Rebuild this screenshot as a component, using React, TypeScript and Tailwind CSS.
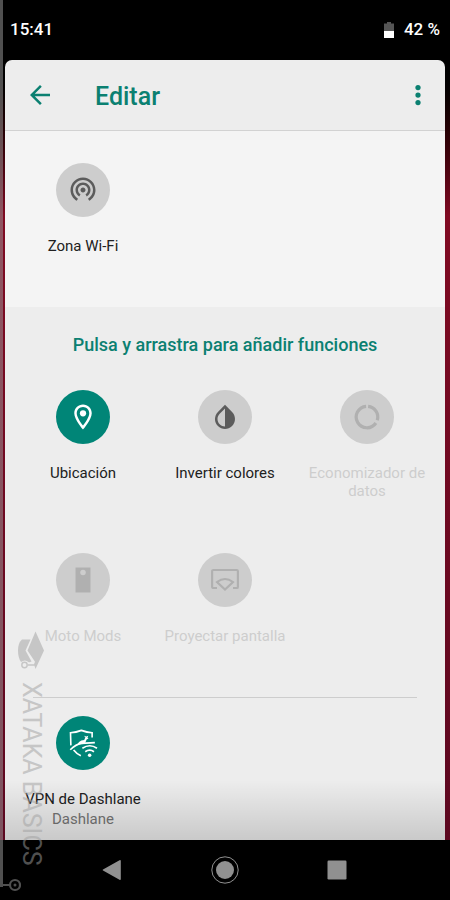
import type { ReactNode } from "react"

type TileState = "active" | "inactive" | "unavailable"

interface Tile {
  label: string
  sublabel?: string
  state: TileState
  icon: ReactNode
}

const CIRCLE_STYLES: Record<TileState, string> = {
  active: "bg-[#008577] text-white",
  inactive: "bg-[#cdcdcd] text-[#5c5c5c]",
  unavailable: "bg-[#cdcdcd] text-[#b0b0b0]",
}

function Icon({ children }: { children: ReactNode }) {
  return (
    <svg viewBox="0 0 24 24" fill="currentColor" className="size-[30px]" aria-hidden="true">
      {children}
    </svg>
  )
}

const CURRENT_TILES: Tile[] = [
  {
    label: "Zona Wi-Fi",
    state: "inactive",
    icon: (
      <Icon>
        <path d="M12 10c-1.1 0-2 .9-2 2s.9 2 2 2 2-.9 2-2-.9-2-2-2zm6 2c0-3.31-2.69-6-6-6s-6 2.69-6 6c0 2.22 1.21 4.15 3 5.19l1-1.74c-1.19-.7-2-1.97-2-3.45 0-2.21 1.79-4 4-4s4 1.79 4 4c0 1.48-.81 2.75-2 3.45l1 1.74c1.79-1.04 3-2.97 3-5.19zM12 2C6.48 2 2 6.48 2 12c0 3.7 2.01 6.92 4.99 8.65l1-1.73C5.61 17.53 4 14.96 4 12c0-4.42 3.58-8 8-8s8 3.58 8 8c0 2.96-1.61 5.53-4 6.92l1 1.73c2.99-1.73 5-4.95 5-8.65 0-5.52-4.48-10-10-10z" />
      </Icon>
    ),
  },
]

const AVAILABLE_TILES: Tile[] = [
  {
    label: "Ubicación",
    state: "active",
    icon: (
      <Icon>
        <path d="M12 2C8.13 2 5 5.13 5 9c0 5.25 7 13 7 13s7-7.75 7-13c0-3.87-3.13-7-7-7zM7 9c0-2.76 2.24-5 5-5s5 2.24 5 5c0 2.88-2.88 7.19-5 9.88C9.92 16.21 7 11.85 7 9z" />
        <circle cx="12" cy="9" r="2.5" />
      </Icon>
    ),
  },
  {
    label: "Invertir colores",
    state: "inactive",
    icon: (
      <Icon>
        <path d="M17.66 7.93L12 2.27 6.34 7.93c-3.12 3.12-3.12 8.19 0 11.31C7.9 20.8 9.95 21.58 12 21.58s4.1-.78 5.66-2.34c3.12-3.12 3.12-8.19 0-11.31zM12 19.59c-1.6 0-3.11-.62-4.24-1.76C6.62 16.69 6 15.19 6 13.59s.62-3.11 1.76-4.24L12 5.1v14.49z" />
      </Icon>
    ),
  },
  {
    label: "Economizador de datos",
    state: "unavailable",
    icon: (
      <Icon>
        <g fill="none" stroke="currentColor" strokeWidth="2.6">
          <path d="M12.9 3.45A8.6 8.6 0 0 1 20.2 14.6" />
          <path d="M19.1 16.8A8.6 8.6 0 1 1 11.3 3.43" />
        </g>
      </Icon>
    ),
  },
  {
    label: "Moto Mods",
    state: "unavailable",
    icon: (
      <Icon>
        <path d="M6 2h12v20H6z" />
        <circle cx="12" cy="6" r="2.2" fill="#cdcdcd" />
      </Icon>
    ),
  },
  {
    label: "Proyectar pantalla",
    state: "unavailable",
    icon: (
      <Icon>
        <g fill="none" stroke="currentColor" strokeWidth="1.7">
          <path d="M5.6 18.4H2.6a.9.9 0 0 1-.9-.9V4.9a.9.9 0 0 1 .9-.9h18.8a.9.9 0 0 1 .9.9v12.6a.9.9 0 0 1-.9.9h-3" />
          <path d="M5.6 13.6Q12 8.8 18.4 13.600L12 19.600z" />
        </g>
      </Icon>
    ),
  },
]

const APP_TILES: Tile[] = [
  {
    label: "VPN de Dashlane",
    sublabel: "Dashlane",
    state: "active",
    icon: (
      <Icon>
        <g fill="none" stroke="currentColor" strokeWidth="1.3">
          <path d="M2.300 13.900L2 3.800Q6.500 3.600 10.700 1.900 15 3.600 19.300 3.800V7.600" />
          <path d="M1.800 17.400Q6.500 13 10.500 12.300L21.500 11.700" />
          <path d="M4.500 17.600Q6.800 20.600 10.300 22.200" />
          <path d="M11.500 16.200q5.900-4 11.700 0M13.800 19q3.500-2.600 7 0" />
        </g>
        <path d="M7.500 13.200q1-2.600 3.200-3.200l2.300-.5.900-2.100-1.200-1.200 2 .6 1.500-.6-.6 1.500.8.700-1.500.7-1 2.500-1.600 1.200z" />
        <circle cx="17.300" cy="21.800" r="1.400" />
      </Icon>
    ),
  },
]

function QuickTile({ tile }: { tile: Tile }) {
  const disabled = tile.state === "unavailable"

  return (
    <button type="button" disabled={disabled} className="flex flex-col items-center">
      <span className={`flex size-[54px] items-center justify-center rounded-full ${CIRCLE_STYLES[tile.state]}`}>
        {tile.icon}
      </span>
      <span className={`mt-5 px-2 text-[15px] leading-[18px] ${disabled ? "text-[#cdcdcd]" : "text-[#212121]"}`}>
        {tile.label}
      </span>
      {tile.sublabel && <span className="text-[15px] leading-[22px] text-[#757575]">{tile.sublabel}</span>}
    </button>
  )
}

function TileGrid({ tiles }: { tiles: Tile[] }) {
  return (
    <div className="grid auto-rows-min grid-cols-3 items-start gap-y-[53px] px-[7px]">
      {tiles.map((tile) => (
        <QuickTile key={tile.label} tile={tile} />
      ))}
    </div>
  )
}

function StatusBar() {
  return (
    <div className="flex h-[60px] items-center justify-between bg-black px-[10px] text-[17px] font-medium text-white">
      <span>15:41</span>
      <span className="flex items-center gap-[10px]">
        <svg viewBox="0 0 10 16" className="h-4 w-[10px]" aria-hidden="true">
          <path fill="#555" d="M3 0h4v1.500h3V9H0V1.500h3z" />
          <path fill="#fff" d="M0 9h10v7H0z" />
        </svg>
        42 %
      </span>
    </div>
  )
}

function Toolbar() {
  return (
    <header className="flex h-[71px] items-center border-b border-[#d2d2d2] px-5 text-[#0b8071]">
      <button type="button" aria-label="Atrás" className="flex size-[30px] items-center justify-center">
        <svg viewBox="0 0 24 24" fill="currentColor" className="size-[30px]" aria-hidden="true">
          <path d="M20 11H7.830l5.590-5.590L12 4l-8 8 8 8 1.410-1.410L7.830 13H20v-2z" />
        </svg>
      </button>
      <h1 className="ml-10 flex-1 pt-[3px] text-[25px] leading-8 font-medium">Editar</h1>
      <button type="button" aria-label="Más opciones" className="-mr-2 flex size-[30px] items-center justify-center">
        <svg viewBox="0 0 24 24" fill="currentColor" className="size-[30px]" aria-hidden="true">
          <circle cx="12" cy="6" r="2.100" />
          <circle cx="12" cy="12" r="2.100" />
          <circle cx="12" cy="18" r="2.100" />
        </svg>
      </button>
    </header>
  )
}

function NavBar() {
  return (
    <nav className="flex h-[60px] items-center justify-around bg-black px-14 text-[#909090]">
      <button type="button" aria-label="Atrás">
        <svg viewBox="0 0 28 28" fill="currentColor" className="size-7" aria-hidden="true">
          <path d="M5 13.400L21.500 4.200q1.300-.6 1.300.8v18q0 1.400-1.300.8L5 14.600q-.8-.6 0-1.200z" />
        </svg>
      </button>
      <button type="button" aria-label="Inicio">
        <svg viewBox="0 0 28 28" fill="currentColor" className="size-7" aria-hidden="true">
          <circle cx="14" cy="14" r="13.200" fill="none" stroke="currentColor" />
          <circle cx="14" cy="14" r="9" />
        </svg>
      </button>
      <button type="button" aria-label="Recientes">
        <svg viewBox="0 0 28 28" fill="currentColor" className="size-7" aria-hidden="true">
          <rect x="3.500" y="4.500" width="19" height="19" rx="1.200" />
        </svg>
      </button>
    </nav>
  )
}

function Watermark() {
  return (
    <div className="pointer-events-none absolute inset-y-0 left-0 w-[50px] text-[#a0a0a0] opacity-50">
      <div className="absolute top-0 bottom-[13px] left-0 w-[3px] bg-current" />
      <svg viewBox="0 0 18 14" className="absolute bottom-2 left-[3px] h-[14px] w-[18px]" aria-hidden="true">
        <path fill="currentColor" d="M0 6h7v2H0z" />
        <circle cx="12" cy="7" r="5" fill="none" stroke="currentColor" strokeWidth="2.200" />
        <circle cx="12" cy="7" r="1.500" fill="currentColor" />
      </svg>
      <div className="absolute bottom-[34px] left-[17px] flex flex-col items-center gap-3">
        <svg viewBox="0 0 28 40" className="h-10 w-7" fill="currentColor" aria-hidden="true">
          <path d="M18.500 1.500L27 20.500l-8.500 18.500-1-3.200H10.800v-1.500H17l1-2.500L10.500 20.500z" />
          <path d="M5 9.500h8.500L8.500 20.500l6 11q-2 1-3 .5-3.500-3-7.500 0-3-4.500-3-11.500Q1 13 5 9.500z" />
          <circle cx="7.500" cy="35" r="2.700" fill="none" stroke="currentColor" strokeWidth="1.400" />
        </svg>
        <span className="text-[25px] leading-7 [writing-mode:vertical-rl]">XATAKA BASICS</span>
      </div>
    </div>
  )
}

export default function App() {
  return (
    <div className="relative flex min-h-screen flex-col bg-black font-[Roboto,sans-serif]">
      <StatusBar />

      <div className="flex flex-1 flex-col bg-linear-to-b from-black via-[#800a22] via-20% to-[#5c0820] px-[5px]">
        <main className="relative flex flex-1 flex-col rounded-t-[7px] bg-[#ededed]">
          <Toolbar />

          <section className="bg-[#f4f4f4] pt-8 pb-[52px]">
            <TileGrid tiles={CURRENT_TILES} />
          </section>

          <section className="flex-1 pt-[27px]">
            <h2 className="mb-[34px] text-center text-[18px] leading-[22px] font-medium text-[#0b8071]">
              Pulsa y arrastra para añadir funciones
            </h2>
            <TileGrid tiles={AVAILABLE_TILES} />
            <hr className="mx-7 mt-[52px] mb-[18px] border-[#cdcdcd]" />
            <TileGrid tiles={APP_TILES} />
          </section>

          <div className="pointer-events-none absolute inset-x-0 bottom-0 h-[60px] bg-linear-to-b from-transparent to-black/15" />
        </main>
      </div>

      <NavBar />
      <Watermark />
    </div>
  )
}
